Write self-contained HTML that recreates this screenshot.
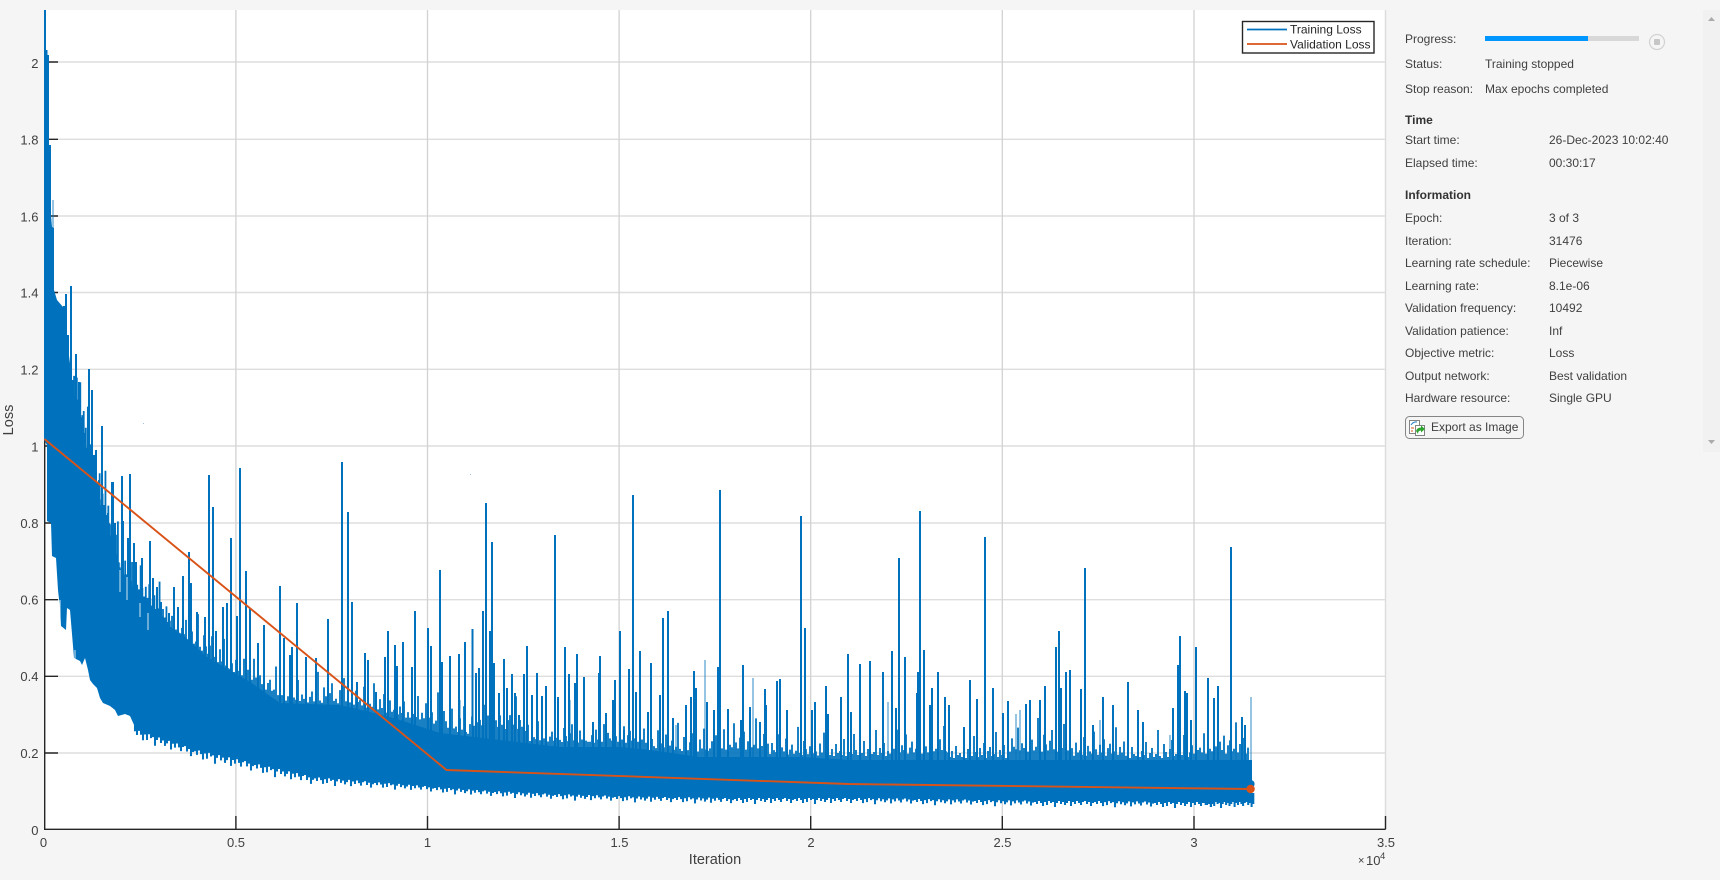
<!DOCTYPE html>
<html lang="en"><head><meta charset="utf-8"><title>Training Progress</title>
<style>
html,body{margin:0;padding:0;background:#f5f5f5}
body{width:1720px;height:880px;position:relative;overflow:hidden;font-family:"Liberation Sans",Arial,sans-serif;color:#404040}
svg{position:absolute;left:0;top:0}
.t{position:absolute;font-size:12px;line-height:14px;white-space:nowrap}
.b{font-weight:bold;color:#333}
.ax{font-size:13px;fill:#404040}
</style></head><body>
<svg width="1720" height="880" viewBox="0 0 1720 880" font-family="'Liberation Sans',Arial,sans-serif">
<defs>
<g id="A"><path vector-effect="non-scaling-stroke" fill="none" stroke="#0072bd" stroke-width="1.8" d="M0 30V-3M2 30V-9M4 30V-2M6 30V-14M8 30V-5M10 30V-7M12 30V-3M14 30V-19M16 30V-2M18 30V-11M20 30V-6M22 30V-4M24 30V-24M26 30V-8M28 30V-3M30 30V-12M32 30V-5M34 30V-17M36 30V-2M38 30V-9M40 30V-13M42 30V-4M44 30V-6M46 30V-28M48 30V-3M50 30V-10M52 30V-5M54 30V-15M56 30V-2M58 30V-7"/></g>
<g id="B"><path vector-effect="non-scaling-stroke" fill="none" stroke="#0072bd" stroke-width="1.8" d="M0 30V-2M2 30V-13M4 30V-6M6 30V-4M8 30V-22M10 30V-3M12 30V-9M14 30V-5M16 30V-18M18 30V-2M20 30V-7M22 30V-12M24 30V-3M26 30V-6M28 30V-30M30 30V-4M32 30V-2M34 30V-16M36 30V-8M38 30V-3M40 30V-11M42 30V-20M44 30V-4M46 30V-6M48 30V-2M50 30V-14M52 30V-5M54 30V-25M56 30V-4M58 30V-3"/></g>
<g id="C"><path vector-effect="non-scaling-stroke" fill="none" stroke="#0072bd" stroke-width="2.05" d="M0 -8V2M2 -8V4M4 -8V1M6 -8V3M8 -8V6M10 -8V2M12 -8V5M14 -8V1M16 -8V3M18 -8V2M20 -8V7M22 -8V3M24 -8V1M26 -8V4M28 -8V2M30 -8V5M32 -8V3M34 -8V1M36 -8V6M38 -8V2M40 -8V4M42 -8V1M44 -8V3M46 -8V5M48 -8V2M50 -8V1M52 -8V4M54 -8V2M56 -8V6M58 -8V3"/></g>
</defs>

<!-- plot area -->
<rect x="44" y="10" width="1341.5" height="819" fill="#fff"/>
<g fill="none" stroke="#dedede" stroke-width="1.4">
<path d="M45 62H1385M45 139.3H1385M45 216H1385M45 292.5H1385M45 369.3H1385M45 446H1385M45 523H1385M45 599.7H1385M45 676.3H1385M45 753H1385"/>
<path stroke="#d2d2d2" stroke-width="1.3" d="M235.9 10V829M427.5 10V829M619.1 10V829M810.7 10V829M1002.3 10V829M1194 10V829"/>
<path stroke="#dcdcdc" d="M1385.5 10V829"/>
</g>
<!-- axes -->
<g fill="none" stroke="#262626" stroke-width="1.4">
<path d="M44.7 10V829.3H1385.7"/>
<path d="M45 62H58M45 139.3H58M45 216H58M45 292.5H58M45 369.3H58M45 446H58M45 523H58M45 599.7H58M45 676.3H58M45 753H58"/>
<path d="M235.9 829V816M427.5 829V816M619.1 829V816M810.7 829V816M1002.3 829V816M1194 829V816M1385.5 829V816"/>
</g>

<!-- training mass -->
<path fill="#0072bd" d="M44 60L47 60L48 145L50 145L51 215L52 227L54 228L54 290L57 300L63 307L67 340L74 395L84 440L90 480L102 527L118 573L127 593L140 607L163 622L183 635L207 657L250 682L280 703L340 705L370 712L400 720L440 733L500 740L560 747L620 747L650 750L700 757L800 757L850 760L1252 760L1252 800L1200 800L1100 798L1000 797L850 795L800 795L620 792L500 788L430 783L400 780L350 777L300 771L290 769L275 765L260 760L245 757L230 752L210 746L197 743L190 740L183 735L178 733L170 730L160 733L155 727L150 729L145 725L140 729L135 727L130 716L125 714L118 716L115 710L110 706L103 703L100 698L97 688L93 684L90 680L88 670L85 658L82 665L80 661L74 658L72 634L70 610L67 608L66 630L61 626L60 608L58 590L56 558L52 556L51 523L47 521L47 445L44 440Z"/>
<g>
<use href="#A" transform="matrix(.345 1.47 0 2 72 395)"/>
<use href="#B" transform="matrix(.48 1.6 0 1.8 92 480)"/>
<use href="#A" transform="matrix(.86 .98 0 1.3 120 573)"/>
<use href="#B" transform="matrix(1 .72 0 1.2 170 630)"/>
<use href="#A" transform="matrix(1 .55 0 1.1 230 672)"/>
<use href="#B" transform="matrix(1 .03 0 1.1 290 704)"/>
<use href="#A" transform="matrix(1 .25 0 1.2 350 706)"/>
<use href="#B" transform="matrix(1 .3 0 1.2 410 720)"/>
<use href="#A" transform="matrix(1 .1 0 1.3 470 728)"/>
<use href="#B" transform="matrix(1 .03 0 1 530 743)"/>
<use href="#A" transform="matrix(1 0 0 1.1 590 745)"/>
<use href="#B" transform="matrix(1 .03 0 1 650 752)"/>
<use href="#A" transform="matrix(1 0 0 1.2 710 752)"/>
<use href="#B" transform="matrix(1 .03 0 1 770 756)"/>
<use href="#A" transform="matrix(1 0 0 1 830 758)"/>
<use href="#B" transform="matrix(1 0 0 1.2 890 756)"/>
<use href="#A" transform="matrix(1 0 0 1 950 760)"/>
<use href="#B" transform="matrix(1 0 0 1.2 1010 754)"/>
<use href="#A" transform="matrix(1 0 0 1.1 1070 758)"/>
<use href="#B" transform="matrix(1 0 0 1 1130 760)"/>
<use href="#A" transform="matrix(1 0 0 1.2 1190 756)"/>
<use href="#C" transform="matrix(1 .33 0 1.6 135 728)"/>
<use href="#C" transform="matrix(1 .23 0 1.6 195 748)"/>
<use href="#C" transform="matrix(1 .23 0 1.5 255 762)"/>
<use href="#C" transform="matrix(1 .08 0 1.2 315 776)"/>
<use href="#C" transform="matrix(1 .08 0 1 375 781)"/>
<use href="#C" transform="matrix(1 .07 0 1 435 786)"/>
<use href="#C" transform="matrix(1 .05 0 1 495 790)"/>
<use href="#C" transform="matrix(1 .03 0 1 555 793)"/>
<use href="#C" transform="matrix(1 .02 0 1 615 795)"/>
<use href="#C" transform="matrix(1 .02 0 1 675 796)"/>
<use href="#C" transform="matrix(1 0 0 1 735 797)"/>
<use href="#C" transform="matrix(1 0 0 1 795 797)"/>
<use href="#C" transform="matrix(1 .01 0 1 855 797)"/>
<use href="#C" transform="matrix(1 .01 0 1 915 798)"/>
<use href="#C" transform="matrix(1 .01 0 1 975 799)"/>
<use href="#C" transform="matrix(1 0 0 1 1035 800)"/>
<use href="#C" transform="matrix(1 .01 0 1 1095 800)"/>
<use href="#C" transform="matrix(1 0 0 1 1155 801)"/>
<use href="#C" transform="matrix(.85 0 0 1 1204 801)"/>
</g>
<!-- explicit spikes -->
<path fill="none" stroke="#0072bd" stroke-width="2" d="M45 10V70M46.5 50V90M48 55V150M50 145V230M56 302V340M58 306V340M60 310V350M62 308V350M64 306V350M66 294V360M68 335V380M71 286V400M73 390V420M76 354V440M77 405V440M79 382V450M82 422V480M85 470V500M87 480V520M89 369V540M92 390V540M94 455V560M96 450V560M99 480V560M102 426V570M104 505V570M106 515V580M108 513V580M110 545V590M112 482V590M113 482V590M115 523V600M122 476V610M123 521V610M128 538V620M130 474V620M134 543V620M136 562V620M142 558V630M150 541V640M153 578V640M157 587V640M161 602V650M163 622V650M167 622V650M169 613V650M174 587V660M178 607V660M183 576V670M189 552V670M191 583V670M197 612V680M205 617V680M209 475V690M213 507V690M216 631V690M223 607V700M227 603V700M231 538V700M237 616V700M240 468V700M246 571V710M250 608V710M258 643V710M264 625V710M280 586V720M284 638V720M290 655V720M292 647V720M297 603V720M306 657V720M316 658V720M328 619V730M342 462V730M348 512V730M352 602V730M357 682V730M365 653V730M368 660V730M376 692V730M385 657V730M388 631V730M395 645V730M397 666V730M403 642V740M412 667V740M415 611V740M428 628V750M431 646V750M440 570V750M442 662V750M450 656V750M459 654V750M465 642V750M472.500 629V750M476 673V750M479 668V750M483 611V750M486 503V750M490 631V750M492 542V750M494 663V750M499 693V750M504 659V750M507 688V750M512 674V750M515 693V750M519 715V750M524 674V750M527 646V750M532 695V750M537 673V750M542 696V750M546 686V750M555 535V760M558 697V760M565 647V760M569 674V760M575 683V760M577 654V760M584 677V760M593 722V760M599 673V760M600 656V760M606 713V760M613 700V760M615 680V760M620 631V760M624 730V760M629 669V760M633 495V760M636 692V760M640 651V760M648 712V760M651 663V760M660 695V760M663 618V760M668 611V760M673 718V760M686 705V760M691 697V760M694 671V760M696 688V760M707 702V760M714 710V760M718 667V760M720 490V760M728 709V760M741 720V760M743 665V760M750 707V760M760 722V760M765 689V760M766 705V760M777 681V760M780 679V760M787 710V760M801 516V760M805 628V760M812 710V760M815 702V760M826 686V760M828 714V760M841 697V760M848 654V770M851 712V770M860 664V770M870 661V770M883 672V770M892 651V770M896 708V770M899 558V770M905 657V770M917 693V770M918 672V770M920 511V770M924 650V770M930 705V770M932 688V770M938 672V770M945 697V770M949 705V770M964 727V770M970 680V770M977 699V770M985 537V770M993 688V770M1003 713V770M1008 701V770M1026 704V770M1030 700V770M1040 700V770M1045 686V770M1056 647V770M1059 631V770M1061 688V770M1066 672V770M1070 670V770M1081 689V770M1085 568V770M1093 725V770M1103 697V770M1113 705V770M1128 682V770M1138 710V770M1143 722V770M1173 708V770M1178 665V770M1180 636V770M1185 691V770M1187 693V770M1191 720V770M1196 647V770M1208 678V770M1214 698V770M1218 686V770M1231 547V770M1242 717V770M1245 725V770"/>
<path fill="none" stroke="#0072bd" stroke-opacity=".55" stroke-width="1.5" d="M53 200V240M705 660V760M753 678V760M888 702V770M1251 697V770M1016 714V770M1100 720V770M1170 735V770M1236 730V770M460 700V750M570 700V760M676 725V760M1020 710V770"/>
<!-- white slits at the edge of the mass -->
<path fill="none" stroke="#fff" stroke-opacity=".75" stroke-width="1.1" d="M120 570V592M127 577V600M140 603V617M148 613V630M75 650V665M60 600V625"/>
<!-- dots -->
<circle cx="1250.6" cy="784" r="4" fill="#0072bd"/>
<rect x="143" y="423" width="1" height="1" fill="#9dc4e3"/><rect x="470" y="474" width="1" height="1" fill="#9dc4e3"/>
<!-- validation line -->
<path fill="none" stroke="#d95319" stroke-width="1.9" d="M44.4 439L446.5 770L848.6 784L1250.6 789"/>
<circle cx="1250.6" cy="789" r="4.2" fill="#d95319"/>

<!-- tick labels -->
<g class="ax" text-anchor="end">
<text x="38.500" y="68">2</text><text x="38.500" y="144.500">1.8</text><text x="38.500" y="221.500">1.6</text><text x="38.500" y="297.500">1.4</text><text x="38.500" y="374.500">1.2</text><text x="38.500" y="451.500">1</text><text x="38.500" y="528">0.8</text><text x="38.500" y="604.500">0.6</text><text x="38.500" y="681">0.4</text><text x="38.500" y="758">0.2</text><text x="38.500" y="835">0</text>
</g>
<g class="ax" text-anchor="middle">
<text x="43.500" y="847">0</text><text x="236" y="847">0.5</text><text x="427.500" y="847">1</text><text x="619.500" y="847">1.5</text><text x="811" y="847">2</text><text x="1002.500" y="847">2.5</text><text x="1194" y="847">3</text><text x="1386" y="847">3.5</text>
</g>
<text x="1358" y="864" font-size="11" fill="#404040">×</text>
<text x="1366" y="865" font-size="13" fill="#404040">10</text>
<text x="1380" y="859" font-size="9.500" fill="#404040">4</text>
<text x="715" y="864" font-size="14.500" fill="#404040" text-anchor="middle">Iteration</text>
<text transform="translate(13 420) rotate(-90)" font-size="14.500" fill="#404040" text-anchor="middle">Loss</text>

<!-- legend -->
<rect x="1242.500" y="21.500" width="131.500" height="31.500" fill="#fff" stroke="#262626" stroke-width="1.400"/>
<path d="M1247 29.500H1287" stroke="#0072bd" stroke-width="1.800"/>
<path d="M1247 44H1287" stroke="#d95319" stroke-width="1.800"/>
<text x="1290" y="33.500" font-size="12" fill="#262626">Training Loss</text>
<text x="1290" y="48.500" font-size="12" fill="#262626">Validation Loss</text>

<!-- panel -->
<rect x="1703" y="10" width="17" height="442" fill="#f1f1f1"/>
<path d="M1708 21L1711.500 17L1715 21Z" fill="#ababab"/>
<path d="M1708 440L1711.500 444L1715 440Z" fill="#ababab"/>
<rect x="1485" y="36" width="154" height="5" fill="#d8d8d8"/>
<rect x="1485" y="36" width="103" height="5" fill="#0096ff"/>
<circle cx="1657" cy="42" r="7.500" fill="none" stroke="#d2d2d2" stroke-width="1.200"/>
<rect x="1654" y="39" width="6" height="6" rx="1" fill="#c6c6c6"/>

<!-- button -->
<rect x="1405.500" y="416.500" width="118" height="22" rx="4" fill="#f5f5f5" stroke="#858585" stroke-width="1"/>
<rect x="1409.500" y="420.500" width="10" height="13" fill="#fff" stroke="#666" stroke-width=".8"/>
<path d="M1411 425Q1413 421.500 1417 422" fill="none" stroke="#2a80c8" stroke-width="1"/>
<path d="M1411 428H1414M1411 431H1413" stroke="#d95319" stroke-width="1"/>
<rect x="1415.500" y="425.500" width="9" height="10" fill="#fff" stroke="#666" stroke-width=".8"/>
<path d="M1416 431Q1417 427.500 1421 427.500V425.500L1425 429L1421 432.500V430.500Q1418 430.500 1418 434Z" fill="#2fa52f"/>
</svg>

<div class="t" style="left:1405px;top:32px">Progress:</div>
<div class="t" style="left:1405px;top:57px">Status:</div><div class="t" style="left:1485px;top:57px">Training stopped</div>
<div class="t" style="left:1405px;top:82px">Stop reason:</div><div class="t" style="left:1485px;top:82px">Max epochs completed</div>
<div class="t b" style="left:1405px;top:113px">Time</div>
<div class="t" style="left:1405px;top:133px">Start time:</div><div class="t" style="left:1549px;top:133px">26-Dec-2023 10:02:40</div>
<div class="t" style="left:1405px;top:156px">Elapsed time:</div><div class="t" style="left:1549px;top:156px">00:30:17</div>
<div class="t b" style="left:1405px;top:188px">Information</div>
<div class="t" style="left:1405px;top:211px">Epoch:</div><div class="t" style="left:1549px;top:211px">3 of 3</div>
<div class="t" style="left:1405px;top:234px">Iteration:</div><div class="t" style="left:1549px;top:234px">31476</div>
<div class="t" style="left:1405px;top:256px">Learning rate schedule:</div><div class="t" style="left:1549px;top:256px">Piecewise</div>
<div class="t" style="left:1405px;top:279px">Learning rate:</div><div class="t" style="left:1549px;top:279px">8.1e-06</div>
<div class="t" style="left:1405px;top:301px">Validation frequency:</div><div class="t" style="left:1549px;top:301px">10492</div>
<div class="t" style="left:1405px;top:324px">Validation patience:</div><div class="t" style="left:1549px;top:324px">Inf</div>
<div class="t" style="left:1405px;top:346px">Objective metric:</div><div class="t" style="left:1549px;top:346px">Loss</div>
<div class="t" style="left:1405px;top:369px">Output network:</div><div class="t" style="left:1549px;top:369px">Best validation</div>
<div class="t" style="left:1405px;top:391px">Hardware resource:</div><div class="t" style="left:1549px;top:391px">Single GPU</div>
<div class="t" style="left:1431px;top:420px">Export as Image</div>
</body></html>
